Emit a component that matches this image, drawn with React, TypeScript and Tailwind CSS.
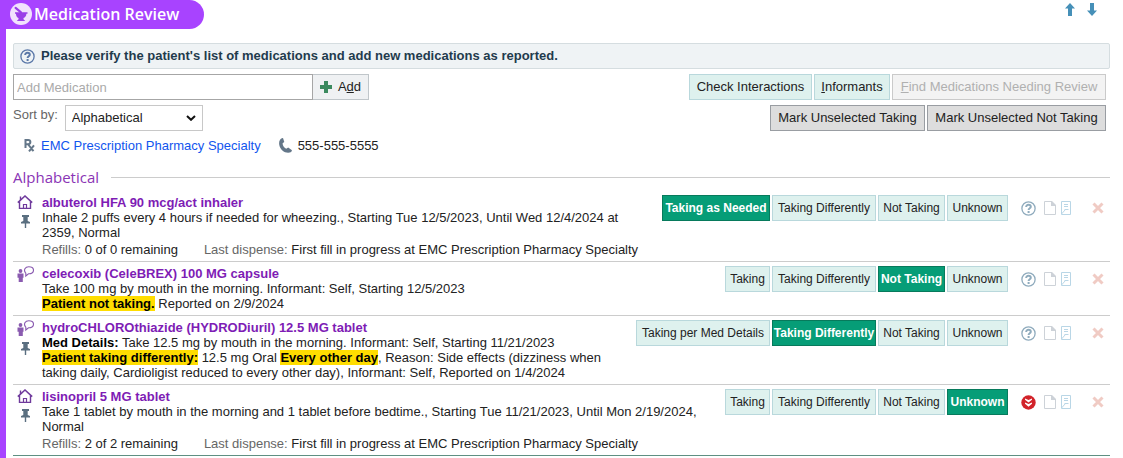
import type { ReactNode } from "react";

type Status = { label: string; selected?: boolean };

type Medication = {
  name: string;
  source: "home" | "informant";
  pinned?: boolean;
  details: ReactNode;
  refills?: string;
  lastDispense?: string;
  statuses: Status[];
  priority?: boolean;
};

function MortarIcon() {
  return (
    <svg className="size-[22px] shrink-0" viewBox="0 0 22 22" aria-hidden="true">
      <circle cx="11" cy="11" r="11" fill="#f1e2fd" />
      <path d="M5 9.200h12.500v1.600h-1.100c-.2 2.600-1.300 3.600-2.900 4.300v1.200l1.700 1.700H6.800l1.700-1.700v-1.200c-1.600-.8-2.400-1.800-2.600-4.300H5z" fill="#9a3fe8" />
      <path d="M5.600 4.900 11 9.300" stroke="#9a3fe8" strokeWidth="2.200" strokeLinecap="round" />
    </svg>
  );
}

function HelpIcon({ color }: { color: string }) {
  return (
    <svg className="size-[15px] shrink-0" viewBox="0 0 15 15" fill="none" aria-hidden="true">
      <circle cx="7.500" cy="7.500" r="6.600" stroke={color} strokeWidth="1.300" />
      <path d="M5.200 6c0-1.400.9-2.200 2.300-2.200s2.300.8 2.300 2c0 1.500-2.200 1.500-2.200 3.200" stroke={color} strokeWidth="2" />
      <path d="M6.600 10h2v2h-2z" fill={color} />
    </svg>
  );
}

function HomeIcon() {
  return (
    <svg className="h-[14px] w-4" viewBox="0 0 16 14" fill="none" aria-hidden="true">
      <path d="M.8 7.600 8 1l7.200 6.600" stroke="#6f3a9c" strokeWidth="1.500" />
      <path d="M3.500 5V1.500M2.500 6.500v7h11v-7" stroke="#6f3a9c" strokeWidth="1.400" />
      <path d="M6.500 13.500v-4h3v4" stroke="#6f3a9c" strokeWidth="1.200" />
    </svg>
  );
}

function InformantIcon() {
  return (
    <svg className="h-4 w-[17px]" viewBox="0 0 17 16" fill="none" aria-hidden="true">
      <circle cx="3.500" cy="5" r="1.900" fill="#8a5bb0" />
      <path d="M.5 7.500h6v4.300H5.800V16H1.700v-4.200H.5z" fill="#8a5bb0" />
      <path d="M8.600 6.800C6.300 4.300 8 .8 11.800.8c2.800 0 4.700 1.400 4.700 3.500 0 2.300-2.200 3.700-5 3.500L8.800 10V7z" stroke="#8a5bb0" strokeWidth="1.100" />
    </svg>
  );
}

function PinIcon() {
  return (
    <svg className="h-[13px] w-[9px]" viewBox="0 0 9 13" fill="#5a6f80" aria-hidden="true">
      <path d="M1 0h7v2H6.700v4L9 7v1.500H5.200V13H3.800V8.500H0V7l2.300-1V2H1z" />
    </svg>
  );
}

function PageIcon() {
  return (
    <svg className="h-[14px] w-3" viewBox="0 0 12 14" fill="none" aria-hidden="true">
      <path d="M.5.5h7l4 4v9H.5z" stroke="#cdd2d8" />
      <path d="M7 0h1l4 4v1H7z" fill="#cdd2d8" />
    </svg>
  );
}

function NoteIcon() {
  return (
    <svg className="h-[14px] w-[10px]" viewBox="0 0 10 14" fill="none" stroke="#b9d6e6" aria-hidden="true">
      <path d="M.5.5h9v13h-9zM3 3.500h4M3 5.500h4M3.500 8.500h4M.5 13 4.500 8.500" />
    </svg>
  );
}

function RemoveIcon() {
  return (
    <svg className="size-3" viewBox="0 0 12 12" aria-hidden="true">
      <path d="m1.500 1.500 9 9m0-9-9 9" stroke="#f0cbc4" strokeWidth="3" />
    </svg>
  );
}

function PriorityIcon() {
  return (
    <svg className="size-[15px] shrink-0" viewBox="0 0 15 15" aria-hidden="true">
      <circle cx="7.500" cy="7.500" r="7.200" fill="#d2232a" />
      <path d="M4 3.500 7.500 5 11 3.500V4.800L7.500 7.500 4 4.800zM4 7.500 7.500 9 11 7.500v1.300L7.500 11.800 4 8.800z" fill="#fff" />
    </svg>
  );
}

function MoveIcon({ down }: { down?: boolean }) {
  return (
    <svg className={down ? "h-[13px] w-[10px] rotate-180" : "h-[13px] w-[10px]"} viewBox="0 0 10 13" fill="#4690b8" aria-hidden="true">
      <path d="M5 0 10 5.500H7V13H3V5.500H0z" />
    </svg>
  );
}

function RxIcon() {
  return (
    <svg className="h-[13px] w-[11px]" viewBox="0 0 11 13" fill="none" stroke="#647789" strokeWidth="2" aria-hidden="true">
      <path d="M1.500 9V1h2.700c2.900 0 2.900 4.200 0 4.200H1.500M3.800 5l5.700 7.200M10 6.300 5 12.300" />
    </svg>
  );
}

function PhoneIcon() {
  return (
    <svg className="h-[15px] w-[13px]" viewBox="0 0 13 15" fill="#647789" aria-hidden="true">
      <path d="M2.800.2 4 0l1.300 4-1.700 1.200c0 2.300 1.400 4.500 3.600 5.600l2-1.200 3.800 2.600-.8 1.800C7.500 16.500 1 12.500.2 6.500-.2 3.500.8 1.200 2.800.2z" />
    </svg>
  );
}

function Highlight({ children }: { children: ReactNode }) {
  return <mark className="bg-[#ffdd00] font-bold text-black">{children}</mark>;
}

const medications: Medication[] = [
  {
    name: "albuterol HFA 90 mcg/act inhaler",
    source: "home",
    pinned: true,
    details: "Inhale 2 puffs every 4 hours if needed for wheezing., Starting Tue 12/5/2023, Until Wed 12/4/2024 at 2359, Normal",
    refills: "0 of 0 remaining",
    lastDispense: "First fill in progress at EMC Prescription Pharmacy Specialty",
    statuses: [{ label: "Taking as Needed", selected: true }, { label: "Taking Differently" }, { label: "Not Taking" }, { label: "Unknown" }],
  },
  {
    name: "celecoxib (CeleBREX) 100 MG capsule",
    source: "informant",
    details: (
      <>
        Take 100 mg by mouth in the morning. Informant: Self, Starting 12/5/2023
        <br />
        <Highlight>Patient not taking.</Highlight> Reported on 2/9/2024
      </>
    ),
    statuses: [{ label: "Taking" }, { label: "Taking Differently" }, { label: "Not Taking", selected: true }, { label: "Unknown" }],
  },
  {
    name: "hydroCHLOROthiazide (HYDRODiuril) 12.5 MG tablet",
    source: "informant",
    pinned: true,
    details: (
      <>
        <b className="text-black">Med Details:</b> Take 12.5 mg by mouth in the morning. Informant: Self, Starting 11/21/2023
        <br />
        <Highlight>Patient taking differently:</Highlight> 12.5 mg Oral <Highlight>Every other day</Highlight>, Reason: Side effects (dizziness when
        taking daily, Cardioligist reduced to every other day), Informant: Self, Reported on 1/4/2024
      </>
    ),
    statuses: [{ label: "Taking per Med Details" }, { label: "Taking Differently", selected: true }, { label: "Not Taking" }, { label: "Unknown" }],
  },
  {
    name: "lisinopril 5 MG tablet",
    source: "home",
    pinned: true,
    details: "Take 1 tablet by mouth in the morning and 1 tablet before bedtime., Starting Tue 11/21/2023, Until Mon 2/19/2024, Normal",
    refills: "2 of 2 remaining",
    lastDispense: "First fill in progress at EMC Prescription Pharmacy Specialty",
    statuses: [{ label: "Taking" }, { label: "Taking Differently" }, { label: "Not Taking" }, { label: "Unknown", selected: true }],
    priority: true,
  },
];

const statusWidths: Record<string, string> = {
  Taking: "w-[45px]",
  "Taking as Needed": "w-[108px]",
  "Taking per Med Details": "w-[134px]",
  "Taking Differently": "w-[104px]",
  "Not Taking": "w-[67px]",
  Unknown: "w-[61px]",
};

function StatusButton({ label, selected }: Status) {
  const tone = selected
    ? "border-[#077a5c] bg-[#069d77] font-bold text-white"
    : "border-[#b9d8dc] bg-[#def1ee] text-[#222]";
  return (
    <button
      type="button"
      aria-pressed={!!selected}
      className={`h-[26px] border text-[12px] whitespace-nowrap ${tone} ${statusWidths[label]}`}
    >
      {label}
    </button>
  );
}

function MedicationRow({ med }: { med: Medication }) {
  return (
    <li className="flex items-start border-b border-[#cccccc] py-1 last:border-[#5f8f82]">
      <div className="flex w-[29px] shrink-0 flex-col items-center gap-[6px] pr-[5px]">
        {med.source === "home" ? <HomeIcon /> : <InformantIcon />}
        {med.pinned && <PinIcon />}
      </div>
      <div className="min-w-0 flex-1 leading-[15px]">
        <h3 className="font-bold text-[#7e1cb5]">{med.name}</h3>
        <p className="pr-3">{med.details}</p>
        {med.refills && (
          <p className="mt-[2px] flex gap-[26px] whitespace-nowrap">
            <span>
              <span className="text-[#666]">Refills:</span> {med.refills}
            </span>
            <span>
              <span className="text-[#666]">Last dispense:</span> {med.lastDispense}
            </span>
          </p>
        )}
      </div>
      <div className="flex shrink-0 items-center">
        <div className="flex gap-[2px]" role="group" aria-label={med.name}>
          {med.statuses.map((s) => (
            <StatusButton key={s.label} {...s} />
          ))}
        </div>
        <button type="button" aria-label="Information" className="ml-[13px]">
          {med.priority ? <PriorityIcon /> : <HelpIcon color="#8fabbd" />}
        </button>
        <button type="button" aria-label="New order" className="ml-2">
          <PageIcon />
        </button>
        <button type="button" aria-label="Add note" className="ml-[5px]">
          <NoteIcon />
        </button>
        <button type="button" aria-label="Remove" className="mr-[6px] ml-[21px]">
          <RemoveIcon />
        </button>
      </div>
    </li>
  );
}

export default function App() {
  return (
    <main className="min-h-screen border-l-[6px] border-[#a843ff] bg-white font-['Liberation_Sans',Arial,sans-serif] text-[13px] text-[#222]">
      <header className="flex items-start justify-between pr-[26px]">
        <h1 className="flex h-[29px] items-center gap-[2px] rounded-r-full bg-[#a843ff] pr-[25px] pb-[1px] pl-1 font-['Open_Sans','Noto_Sans',sans-serif] text-[16px] font-semibold text-white">
          <MortarIcon />
          Medication Review
        </h1>
        <div className="flex gap-3 pt-[3px]">
          <button type="button" aria-label="Move up">
            <MoveIcon />
          </button>
          <button type="button" aria-label="Move down">
            <MoveIcon down />
          </button>
        </div>
      </header>

      <div className="mt-[14px] mr-[13px] ml-[7px]">
        <p className="flex h-[26px] items-center gap-[6px] rounded-xs border border-[#d5dde0] bg-[#eff3f5] px-[6px] font-bold text-[#1f3b4d]">
          <HelpIcon color="#5b78a8" />
          Please verify the patient's list of medications and add new medications as reported.
        </p>

        <div className="mt-[5px] flex justify-between pr-1">
          <form className="flex">
            <input
              type="text"
              aria-label="Add Medication"
              placeholder="Add Medication"
              className="h-[26px] w-[300px] border border-[#a6a6a6] px-[3px] placeholder:text-[#aaaaaa]"
            />
            <button type="button" className="flex h-[26px] w-14 items-center justify-center gap-[6px] border border-l-0 border-[#c0c6ca] bg-[#eff1f3]">
              <svg className="size-3" viewBox="0 0 12 12" fill="#3b8a5f" aria-hidden="true">
                <path d="M4 0h4v4h4v4H8v4H4V8H0V4h4z" />
              </svg>
              <span>
                A<u>d</u>d
              </span>
            </button>
          </form>
          <div className="flex gap-[2px]">
            <button type="button" className="h-[26px] w-[123px] border border-[#b9d8dc] bg-[#def1ee]">
              Check Interactions
            </button>
            <button type="button" className="h-[26px] w-[76px] border border-[#b9d8dc] bg-[#def1ee]">
              <u>I</u>nformants
            </button>
            <button type="button" disabled className="h-[26px] w-[214px] border border-[#cacaca] bg-[#f3f3f3] text-[#b0b0b0]">
              <u>F</u>ind Medications Needing Review
            </button>
          </div>
        </div>

        <div className="mt-[5px] flex justify-between pr-1">
          <div className="flex gap-[7px]">
            <label htmlFor="sort" className="pt-[2px] leading-[15px] text-[#666]">
              Sort by:
            </label>
            <div className="grid items-center">
              <select id="sort" className="col-start-1 row-start-1 h-[26px] w-[138px] appearance-none border border-[#c8c8c8] bg-white px-[6px]">
                <option>Alphabetical</option>
              </select>
              <svg className="pointer-events-none col-start-1 row-start-1 mr-[7px] h-[6px] w-[10px] justify-self-end" viewBox="0 0 10 6" fill="none" stroke="#111" strokeWidth="2" aria-hidden="true">
                <path d="m1 1 4 3.800L9 1" />
              </svg>
            </div>
          </div>
          <div className="flex gap-[2px]">
            <button type="button" className="h-[26px] w-[155px] border border-[#999da2] bg-[#dddddd]">
              Mark Unselected Taking
            </button>
            <button type="button" className="h-[26px] w-[179px] border border-[#999da2] bg-[#dddddd]">
              Mark Unselected Not Taking
            </button>
          </div>
        </div>

        <div className="mt-[7px] flex items-center gap-[6px] pl-[11px] leading-[15px]">
          <RxIcon />
          <a href="#pharmacy" className="text-[#1155ee]">
            EMC Prescription Pharmacy Specialty
          </a>
          <span className="flex items-center gap-[6px] pl-[12px]">
            <PhoneIcon />
            555-555-5555
          </span>
        </div>

        <section>
          <h2 className="mt-[13px] flex h-[22px] items-center gap-3 font-['Open_Sans','Noto_Sans',sans-serif] text-[15px] text-[#8a35b5] after:h-px after:flex-1 after:bg-[#cccccc]">
            Alphabetical
          </h2>
          <ul className="mt-[3px]">
            {medications.map((med) => (
              <MedicationRow key={med.name} med={med} />
            ))}
          </ul>
        </section>
      </div>
    </main>
  );
}
